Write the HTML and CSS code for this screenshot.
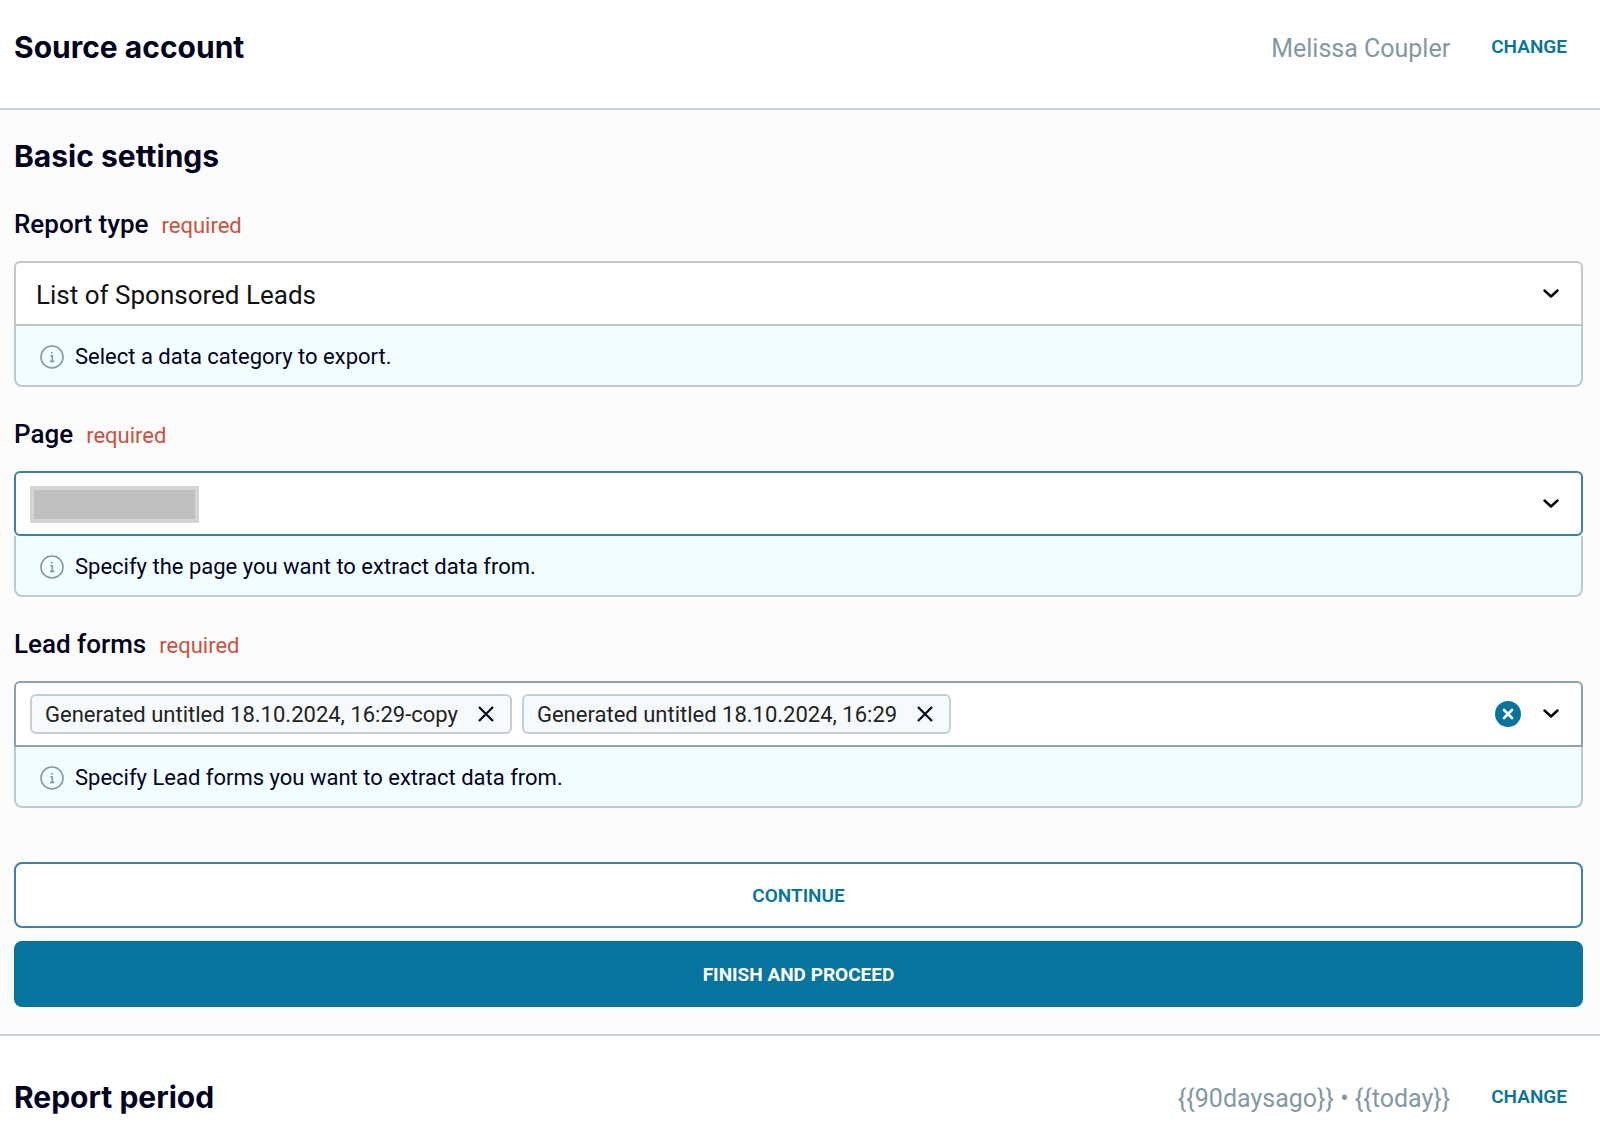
FILE: index.html
```
<!DOCTYPE html>
<html lang="en">
<head>
    <meta charset="UTF-8">
    <meta name="viewport" content="width=device-width, initial-scale=1.0">
    <title>Source settings</title>
    <link rel="stylesheet" href="styles.css">
</head>
<body>
    <!-- Source account -->
    <section class="summary">
        <h2>Source account</h2>
        <span class="summary-value">Melissa Coupler</span>
        <button type="button" class="btn-link">CHANGE</button>
    </section>

    <!-- Basic settings -->
    <form class="settings">
        <h2>Basic settings</h2>

        <div class="field">
            <div class="field-label">
                <label for="report-type">Report type</label>
                <span class="required">required</span>
            </div>
            <div class="control">
                <select id="report-type" class="select">
                    <option>List of Sponsored Leads</option>
                </select>
                <svg class="chevron" viewBox="0 0 16 10"><path d="M1.5 1.5 8 7.5l6.5-6"/></svg>
            </div>
            <p class="hint">
                <svg class="info" viewBox="0 0 24 24"><circle cx="12" cy="12" r="11"/><path d="M10.3 10.8h2v5.4M10 16.4h4.4"/><circle class="info-dot" cx="11.9" cy="7.8" r="1"/></svg>
                Select a data category to export.
            </p>
        </div>

        <div class="field">
            <div class="field-label">
                <label for="page">Page</label>
                <span class="required">required</span>
            </div>
            <div class="control">
                <select id="page" class="select select-focus">
                    <option></option>
                </select>
                <span class="redacted"></span>
                <svg class="chevron" viewBox="0 0 16 10"><path d="M1.5 1.5 8 7.5l6.5-6"/></svg>
            </div>
            <p class="hint">
                <svg class="info" viewBox="0 0 24 24"><circle cx="12" cy="12" r="11"/><path d="M10.3 10.8h2v5.4M10 16.4h4.4"/><circle class="info-dot" cx="11.9" cy="7.8" r="1"/></svg>
                Specify the page you want to extract data from.
            </p>
        </div>

        <div class="field">
            <div class="field-label">
                <label for="lead-forms">Lead forms</label>
                <span class="required">required</span>
            </div>
            <div class="control multi">
                <span class="chip">
                    Generated untitled 18.10.2024, 16:29-copy
                    <button type="button" class="chip-remove" aria-label="Remove"><svg viewBox="0 0 16 16"><path d="M1 1l14 14M15 1 1 15"/></svg></button>
                </span>
                <span class="chip">
                    Generated untitled 18.10.2024, 16:29
                    <button type="button" class="chip-remove" aria-label="Remove"><svg viewBox="0 0 16 16"><path d="M1 1l14 14M15 1 1 15"/></svg></button>
                </span>
                <input type="text" id="lead-forms" class="multi-input">
                <button type="button" class="clear" aria-label="Clear all"><svg viewBox="0 0 26 26"><circle cx="13" cy="13" r="13"/><path d="M9 9l8 8M17 9l-8 8"/></svg></button>
                <svg class="chevron" viewBox="0 0 16 10"><path d="M1.5 1.5 8 7.5l6.5-6"/></svg>
            </div>
            <p class="hint">
                <svg class="info" viewBox="0 0 24 24"><circle cx="12" cy="12" r="11"/><path d="M10.3 10.8h2v5.4M10 16.4h4.4"/><circle class="info-dot" cx="11.9" cy="7.8" r="1"/></svg>
                Specify Lead forms you want to extract data from.
            </p>
        </div>

        <div class="actions">
            <button type="button" class="btn">CONTINUE</button>
            <button type="submit" class="btn btn-primary">FINISH AND PROCEED</button>
        </div>
    </form>

    <!-- Report period -->
    <section class="summary summary-last">
        <h2>Report period</h2>
        <span class="summary-value">{{90daysago}} • {{today}}</span>
        <button type="button" class="btn-link">CHANGE</button>
    </section>
</body>
</html>
```
FILE: styles.css
```
* {
    margin: 0;
    padding: 0;
    box-sizing: border-box;
}

body {
    font-family: Roboto, "Liberation Sans", sans-serif;
    background-color: #fff;
    color: #02021e;
}

button,
input,
select {
    font-family: inherit;
}

button {
    cursor: pointer;
}

h2 {
    font-family: Inter, sans-serif;
    font-size: 30px;
    font-weight: 700;
    line-height: 36px;
}

/* Collapsed sections */
.summary {
    display: flex;
    align-items: center;
    padding: 29px 33px 43px 14px;
}

.summary-last {
    padding-top: 43px;
    padding-bottom: 28px;
}

.summary h2 {
    flex: 1;
}

.summary-value {
    padding-top: 4px;
    font-size: 25px;
    line-height: 32px;
    color: #8299a4;
}

.btn-link {
    margin-left: 41px;
    border: none;
    background: none;
    color: #07749e;
    font-size: 19px;
    font-weight: 600;
    line-height: 36px;
}

/* Expanded section */
.settings {
    padding: 28px 17px 27px 14px;
    background-color: #fcfcfc;
    border-top: 2px solid #c9d1d6;
    border-bottom: 2px solid #c9d1d6;
}

.field {
    margin-top: 31px;
}

.settings h2 + .field {
    margin-top: 34px;
}

.field-label {
    display: flex;
    align-items: baseline;
    gap: 13px;
    height: 32px;
    margin-bottom: 21px;
    font-size: 26px;
    font-weight: 500;
    line-height: 32px;
}

.required {
    color: #cc513d;
    font-size: 22px;
    font-weight: 400;
}

.control {
    position: relative;
}

.select {
    display: block;
    appearance: none;
    width: 100%;
    height: 65px;
    padding: 2px 60px 0 20px;
    border: 2px solid #c3c6c8;
    border-radius: 6px 6px 0 0;
    background-color: #fff;
    color: #111;
    font-size: 26px;
}

.select-focus {
    border-color: #3a82aa;
    border-radius: 6px;
}

.chevron {
    position: absolute;
    top: 50%;
    right: 24px;
    width: 16px;
    height: 10px;
    margin-top: -5px;
    fill: none;
    stroke: #000;
    stroke-width: 2.4;
    stroke-linecap: round;
    stroke-linejoin: round;
    pointer-events: none;
}

.redacted {
    position: absolute;
    top: 15px;
    left: 16px;
    width: 169px;
    height: 37px;
    border: 4px solid #d5d5d5;
    background-color: #bfbfbf;
}

.hint {
    display: flex;
    align-items: center;
    gap: 11px;
    height: 61px;
    padding: 2px 24px 0;
    border: 2px solid #bccad3;
    border-top: none;
    border-radius: 0 0 8px 8px;
    background-color: #f1fdff;
    font-size: 22px;
}

.info {
    width: 24px;
    height: 24px;
    fill: none;
    stroke: #8299a4;
    stroke-width: 1.6;
}

.info .info-dot {
    fill: #8299a4;
    stroke: none;
}

/* Multi select */
.multi {
    display: flex;
    align-items: center;
    gap: 10px;
    padding: 11px 60px 11px 14px;
    border: 2px solid #8fa2ac;
    border-radius: 6px 6px 0 0;
    background-color: #fff;
}

.multi .chevron {
    right: 22px;
}

.chip {
    display: flex;
    align-items: center;
    gap: 20px;
    height: 40px;
    padding: 0 16px 0 13px;
    border: 2px solid #c3ced5;
    border-radius: 6px;
    background-color: #f7fafc;
    color: #222;
    font-size: 22px;
    white-space: nowrap;
}

.chip-remove {
    width: 16px;
    height: 16px;
    border: none;
    background: none;
}

.chip-remove svg {
    display: block;
    fill: none;
    stroke: #02021e;
    stroke-width: 2.2;
}

.multi-input {
    flex: 1;
    min-width: 0;
    border: none;
    outline: none;
    background: none;
    font-size: 22px;
}

.clear {
    width: 26px;
    height: 26px;
    border: none;
    background: none;
}

.clear svg {
    display: block;
    fill: #07749e;
}

.clear path {
    stroke: #fff;
    stroke-width: 2.6;
    stroke-linecap: round;
}

/* Buttons */
.actions {
    display: flex;
    flex-direction: column;
    gap: 13px;
    margin-top: 54px;
}

.btn {
    height: 66px;
    border: 2px solid #3a82aa;
    border-radius: 8px;
    background-color: #fff;
    color: #07749e;
    font-size: 19px;
    font-weight: 600;
}

.btn-primary {
    border-color: #07749e;
    background-color: #07749e;
    color: #fff;
    font-weight: 700;
}
```
